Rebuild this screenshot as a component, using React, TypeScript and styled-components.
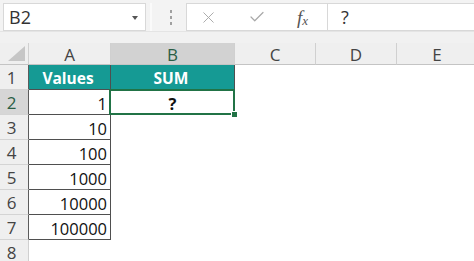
import styled, { createGlobalStyle } from "styled-components";
import { Check, X } from "lucide-react";

const GlobalStyle = createGlobalStyle`
  * { box-sizing: border-box; }
  body {
    margin: 0;
    background: #ffffff;
    font-family: "Open Sans", "Noto Sans", sans-serif;
    overflow: hidden;
  }
`;

type Row = { n: number; a?: string; b?: string };

const rows: Row[] = [
  { n: 1, a: "Values", b: "SUM" },
  { n: 2, a: "1", b: "?" },
  { n: 3, a: "10" },
  { n: 4, a: "100" },
  { n: 5, a: "1000" },
  { n: 6, a: "10000" },
  { n: 7, a: "100000" },
  { n: 8 },
];

const columns = ["A", "B", "C", "D", "E"];

function App() {
  return (
    <Window>
      <GlobalStyle />
      <FormulaBar>
        <NameBox>
          B2
          <Caret />
        </NameBox>
        <Splitter>
          <Dot />
          <Dot />
          <Dot />
        </Splitter>
        <ActionBox>
          <X size={19} strokeWidth={1.2} color="#a8a8a8" />
          <Check size={18} strokeWidth={1.6} color="#a8a8a8" />
          <Fx>
            f<sub>x</sub>
          </Fx>
        </ActionBox>
        <FormulaInput>?</FormulaInput>
      </FormulaBar>

      <Sheet>
        <Corner>
          <CornerMark />
        </Corner>
        {columns.map((c) => (
          <ColHead key={c} $selected={c === "B"}>
            {c}
          </ColHead>
        ))}

        {rows.map((r) => {
          const boxed = r.a !== undefined;
          const header = r.n === 1;
          return [
            <RowHead key={`h${r.n}`} $selected={r.n === 2} $boxed={boxed}>
              {r.n}
            </RowHead>,
            <Cell
              key={`a${r.n}`}
              $kind={header ? "teal" : boxed ? "value" : "plain"}
            >
              {r.a}
            </Cell>,
            r.n === 2 ? (
              <SelectedCell key={`b${r.n}`}>
                {r.b}
                <Handle />
              </SelectedCell>
            ) : (
              <Cell key={`b${r.n}`} $kind={header ? "teal" : "plain"}>
                {r.b}
              </Cell>
            ),
            <Cell key={`c${r.n}`} $kind="plain" />,
            <Cell key={`d${r.n}`} $kind="plain" />,
            <Cell key={`e${r.n}`} $kind="plain" />,
          ];
        })}
      </Sheet>
    </Window>
  );
}

export default App;

const Window = styled.div`
  width: 474px;
  height: 261px;
  overflow: hidden;
  background: #f1f1f1;
  display: flex;
  flex-direction: column;
`;

const FormulaBar = styled.div`
  display: flex;
  align-items: flex-start;
  height: 34px;
  padding: 3px 0 0 3px;
  background: #f3f3f3;
  border-bottom: 1px solid #e4e4e4;
`;

const NameBox = styled.div`
  position: relative;
  display: flex;
  align-items: center;
  width: 143px;
  height: 28px;
  padding-left: 5px;
  background: #ffffff;
  border: 1px solid #d8d8d8;
  font-size: 18px;
  color: #333333;
`;

const Caret = styled.span`
  position: absolute;
  right: 7px;
  top: 12px;
  width: 0;
  height: 0;
  border-left: 3.5px solid transparent;
  border-right: 3.5px solid transparent;
  border-top: 4px solid #555555;
`;

const Splitter = styled.div`
  width: 40px;
  height: 28px;
  display: flex;
  flex-direction: column;
  align-items: center;
  justify-content: center;
  gap: 3px;
  border-left: 2px solid #fafafa;
  margin-left: 4px;
  margin-right: -4px;
`;

const Dot = styled.span`
  width: 2px;
  height: 3px;
  background: #a0a0a0;
`;

const ActionBox = styled.div`
  display: flex;
  align-items: center;
  justify-content: space-between;
  width: 141px;
  height: 28px;
  padding: 0 19px 0 12px;
  background: #ffffff;
  border: 1px solid #d8d8d8;
  border-right: none;
`;

const Fx = styled.span`
  font-family: "Liberation Serif", "DejaVu Serif", serif;
  font-style: italic;
  font-size: 19px;
  color: #555555;
  line-height: 1;

  sub {
    font-size: 13px;
    vertical-align: -1px;
  }
`;

const FormulaInput = styled.div`
  flex: 1;
  height: 28px;
  display: flex;
  align-items: center;
  padding-left: 13px;
  background: #ffffff;
  border: 1px solid #d8d8d8;
  border-right: none;
  font-size: 18px;
  color: #333333;
`;

const Sheet = styled.div`
  display: grid;
  grid-template-columns: 29px 82px 124px 81px 81px 81px;
  grid-template-rows: 22px;
  grid-auto-rows: 25px;
  margin-top: 11px;
  background: #ffffff;
`;

const Corner = styled.div`
  position: relative;
  background: #efefef;
  border-right: 1px solid #d0d0d0;
  border-bottom: 1px solid #c4c4c4;
`;

const CornerMark = styled.span`
  position: absolute;
  right: 3px;
  bottom: 3px;
  width: 17px;
  height: 15px;
  background: #c6c6c6;
  clip-path: polygon(100% 0, 100% 100%, 0 100%);
`;

const ColHead = styled.div<{ $selected?: boolean }>`
  display: flex;
  align-items: center;
  justify-content: center;
  padding-top: 1px;
  background: ${(p) => (p.$selected ? "#d2d2d2" : "#efefef")};
  border-right: 1px solid #d0d0d0;
  border-bottom: 1px solid #c4c4c4;
  font-size: 17px;
  color: ${(p) => (p.$selected ? "#2a5e45" : "#444444")};
`;

const RowHead = styled.div<{ $selected?: boolean; $boxed?: boolean }>`
  display: flex;
  align-items: center;
  justify-content: center;
  padding-right: 5px;
  background: ${(p) => (p.$selected ? "#d6d6d6" : "#efefef")};
  border-right: 1px solid ${(p) => (p.$boxed ? "#5c5c5c" : "#d0d0d0")};
  border-bottom: 1px solid #d4d4d4;
  font-size: 17px;
  color: ${(p) => (p.$selected ? "#2a5e45" : "#444444")};
`;

const Cell = styled.div<{ $kind: "teal" | "value" | "plain" }>`
  display: flex;
  align-items: center;
  justify-content: ${(p) => (p.$kind === "teal" ? "center" : "flex-end")};
  padding: 2px 3px 0 0;
  background: ${(p) => (p.$kind === "teal" ? "#159a94" : "#ffffff")};
  border-right: 1px solid
    ${(p) => (p.$kind === "plain" ? "transparent" : "#4f4f4f")};
  border-bottom: 1px solid
    ${(p) => (p.$kind === "plain" ? "transparent" : "#4f4f4f")};
  font-size: ${(p) => (p.$kind === "teal" ? "15.5px" : "16.5px")};
  font-weight: ${(p) => (p.$kind === "teal" ? 700 : 400)};
  color: ${(p) => (p.$kind === "teal" ? "#ffffff" : "#111111")};
`;

const SelectedCell = styled.div`
  position: relative;
  display: flex;
  align-items: center;
  justify-content: center;
  padding-top: 2px;
  background: #ffffff;
  border-right: 1px solid #4f4f4f;
  border-bottom: 1px solid #4f4f4f;
  font-size: 16.5px;
  font-weight: 700;
  color: #111111;

  &::after {
    content: "";
    position: absolute;
    inset: -1px -1px -1px -2px;
    border: 2px solid #217346;
    pointer-events: none;
  }
`;

const Handle = styled.span`
  position: absolute;
  right: -4px;
  bottom: -4px;
  width: 7px;
  height: 7px;
  background: #217346;
  border: 1px solid #ffffff;
  z-index: 1;
`;
